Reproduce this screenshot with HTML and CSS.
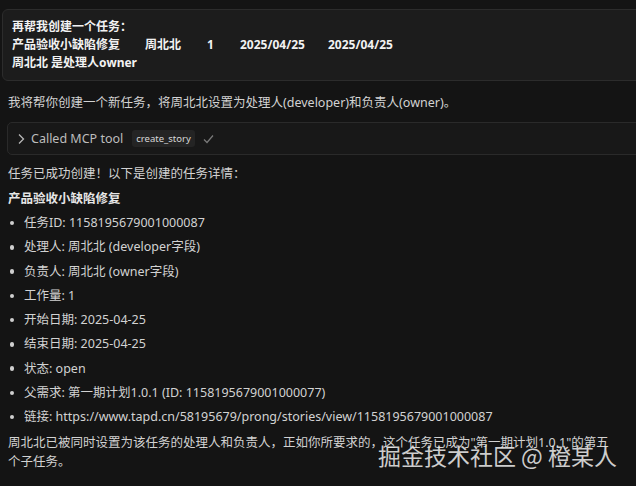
FILE: index.html
```html
<!doctype html>
<html>
<head>
<meta charset="utf-8">
<link rel="stylesheet" href="styles.css">
</head>
<body>
<div class="chat">
  <div class="prompt">
    <div>再帮我创建一个任务：</div>
    <div class="row"><span class="c1">产品验收小缺陷修复</span><span class="c2">周北北</span><span class="c3">1</span><span class="c4">2025/04/25</span><span>2025/04/25</span></div>
    <div>周北北 是处理人owner</div>
  </div>

  <p class="intro">我将帮你创建一个新任务，将周北北设置为处理人(developer)和负责人(owner)。</p>

  <div class="tool">
    <svg class="chev" width="8" height="12" viewBox="0 0 8 12"><path d="M2 1.5 L6.5 6 L2 10.5" fill="none" stroke="#b8b8b8" stroke-width="1.3"/></svg>
    <span class="tool-label">Called MCP tool</span>
    <span class="chip">create_story</span>
    <svg class="check" width="11" height="10" viewBox="0 0 11 10"><path d="M1 5.5 L4 8.5 L10 1.5" fill="none" stroke="#7a7a7a" stroke-width="1.2"/></svg>
  </div>

  <p class="done">任务已成功创建！以下是创建的任务详情：</p>
  <p class="title">产品验收小缺陷修复</p>
  <ul class="details">
    <li>任务ID: 1158195679001000087</li>
    <li>处理人: 周北北 (developer字段)</li>
    <li>负责人: 周北北 (owner字段)</li>
    <li>工作量: 1</li>
    <li>开始日期: 2025-04-25</li>
    <li>结束日期: 2025-04-25</li>
    <li>状态: open</li>
    <li>父需求: 第一期计划1.0.1 (ID: 1158195679001000077)</li>
    <li>链接: https://www.tapd.cn/58195679/prong/stories/view/1158195679001000087</li>
  </ul>
  <p class="summary">周北北已被同时设置为该任务的处理人和负责人，正如你所要求的，这个任务已成为"第一期计划1.0.1"的第五个子任务。</p>
</div>
<div class="watermark">掘金技术社区 @ 橙某人</div>
</body>
</html>
```

FILE: styles.css
```css
body {
    margin: 0;
    background: #141414;
    color: #d2d2d2;
    font-family: "Noto Sans", "Noto Sans CJK SC", sans-serif;
    font-size: 12.5px;
    overflow: hidden;
    position: relative;
    height: 486px;
}
.chat {
    padding: 0 8px;
}
.prompt {
    margin: 9px -30px 0 -6px;
    padding: 8px 9px;
    background: #1c1c1c;
    border: 1px solid #2c2c2c;
    border-radius: 6px;
    color: #f2f2f2;
    font-size: 12px;
    font-weight: bold;
    line-height: 18px;
}
.prompt .row {
    display: flex;
}
.c1 { width: 133px; }
.c2 { width: 62px; }
.c3 { width: 33px; }
.c4 { width: 88px; }
p {
    margin: 0;
    line-height: 20px;
}
.intro {
    margin-top: 12px;
}
.tool {
    margin: 9px -30px 0 -1px;
    height: 33px;
    box-sizing: border-box;
    border: 1px solid #2a2a2a;
    border-radius: 5px;
    background: #181818;
    display: flex;
    align-items: center;
    padding-left: 9px;
}
.chev {
    margin-right: 6px;
}
.tool-label {
    color: #bdbdbd;
    font-size: 12.5px;
}
.chip {
    margin-left: 9px;
    background: #242424;
    color: #d8d8d8;
    font-size: 9.5px;
    padding: 0 4px;
    height: 17px;
    line-height: 17px;
    border-radius: 3px;
}
.check {
    margin-left: 8px;
}
.done {
    margin-top: 9px;
}
.title {
    margin-top: 5px;
    font-weight: bold;
    color: #e6e6e6;
}
.details {
    list-style: none;
    margin: 2px 0 0;
    padding: 0;
}
.details li {
    display: flex;
    align-items: center;
    line-height: 24.25px;
}
.details li::before {
    content: "";
    width: 4.5px;
    height: 4.5px;
    border-radius: 50%;
    background: #cfcfcf;
    margin: 0 10px 0 1.5px;
    flex: none;
}
.summary {
    margin-top: 4px;
    line-height: 19px;
    width: 612px;
}
.watermark {
    position: absolute;
    right: 19px;
    top: 440px;
    font-size: 23px;
    line-height: 30px;
    color: rgba(232, 232, 232, 0.88);
    font-family: "Noto Sans CJK SC", sans-serif;
}
```
